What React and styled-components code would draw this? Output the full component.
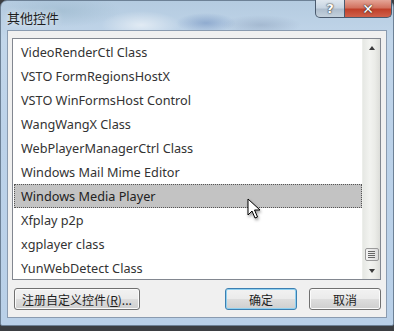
import React from "react";
import styled, { createGlobalStyle } from "styled-components";

const Global = createGlobalStyle`
  html, body { margin: 0; padding: 0; }
  body { width: 394px; height: 331px; overflow: hidden; background: #3b3e42; }
`;

const items = [
  "VideoRenderCtl Class",
  "VSTO FormRegionsHostX",
  "VSTO WinFormsHost Control",
  "WangWangX Class",
  "WebPlayerManagerCtrl Class",
  "Windows Mail Mime Editor",
  "Windows Media Player",
  "Xfplay p2p",
  "xgplayer class",
  "YunWebDetect Class",
];

const SELECTED = 6;

const Window = styled.div`
  width: 394px;
  height: 326px;
  box-sizing: border-box;
  border-radius: 7px 7px 2px 2px;
  background:
    radial-gradient(ellipse 40px 14px at 140px 24px, rgba(255,255,255,0.55), transparent),
    radial-gradient(ellipse 30px 10px at 205px 22px, rgba(90,125,180,0.45), transparent),
    radial-gradient(ellipse 40px 10px at 260px 24px, rgba(120,140,170,0.35), transparent),
    radial-gradient(ellipse 60px 16px at 60px 10px, rgba(150,180,200,0.5), transparent),
    linear-gradient(180deg, #b4cbe0 0%, #c2d6ea 12%, #bcd2e9 40%, #b9d0e8 100%);
  border: 1px solid #6d8196;
  display: flex;
  flex-direction: column;
  font-family: "Noto Sans", "Noto Sans CJK SC", sans-serif;
  position: relative;
`;

const TitleBar = styled.div`
  height: 29px;
  display: flex;
  justify-content: space-between;
  align-items: flex-start;
`;

const Title = styled.div`
  padding: 7px 0 0 6px;
  font-family: "Noto Sans CJK SC", sans-serif;
  font-size: 13px;
  color: #1e1e1e;
  text-shadow: 0 0 6px rgba(255,255,255,0.9);
`;

const Controls = styled.div`
  display: flex;
  margin-right: 1px;
  margin-top: -1px;
`;

const CtrlButton = styled.div`
  height: 18px;
  width: ${(p) => p.$w}px;
  box-sizing: border-box;
  border: 1px solid #4a5a6e;
  border-top: none;
  border-radius: ${(p) => (p.$close ? "0 0 5px 0" : "0 0 0 5px")};
  ${(p) => (p.$close ? "border-left: none;" : "")}
  background: ${(p) =>
    p.$close
      ? "linear-gradient(180deg, #e4a597 0%, #d2725f 45%, #c0402a 55%, #d0604a 100%)"
      : "linear-gradient(180deg, #dfe7ef 0%, #c8d5e2 45%, #aebdcd 55%, #c4d1dd 100%)"};
  display: flex;
  align-items: center;
  justify-content: center;
  color: #fff;
  font-family: "DejaVu Sans", sans-serif;
  font-weight: bold;
  font-size: ${(p) => (p.$close ? 14 : 13)}px;
  text-shadow: 0 0 2px #333, 0 0 1px #222;
`;

const Client = styled.div`
  margin: 0 6px 0 6px;
  height: 288px;
  box-sizing: border-box;
  background: #f0f0f0;
  border: 1px solid #8a9bb0;
  padding: 7px 5px 0 4px;
  display: flex;
  flex-direction: column;
`;

const ListBox = styled.div`
  height: 242px;
  box-sizing: border-box;
  border: 1px solid #828790;
  background: #fff;
  display: flex;
  overflow: hidden;
`;

const Rows = styled.div`
  flex: 1;
  padding-top: 1px;
  padding-left: 1px;
  overflow: hidden;
`;

const Row = styled.div`
  height: 24px;
  box-sizing: border-box;
  display: flex;
  align-items: center;
  padding-left: 7px;
  font-size: 12.7px;
  color: #333;
  white-space: nowrap;
  ${(p) =>
    p.$selected
      ? "background: #c3c3c3; border: 1px dotted #555; padding-left: 6px; color: #222;"
      : ""}
`;

const ScrollBar = styled.div`
  width: 17px;
  display: flex;
  flex-direction: column;
  align-items: center;
  background: linear-gradient(90deg, #e6e8e4 0%, #f2f3f0 40%, #ebece8 70%, #dcddd9 100%);
  border-left: 1px solid #eceeea;
`;

const Arrow = styled.div`
  height: 17px;
  display: flex;
  align-items: center;
  justify-content: center;
  &::after {
    content: "";
    border-left: 3.5px solid transparent;
    border-right: 3.5px solid transparent;
    ${(p) => (p.$down ? "border-top: 4px solid #3a3a3a;" : "border-bottom: 4px solid #3a3a3a;")}
  }
`;

const Track = styled.div`
  flex: 1;
  width: 100%;
  display: flex;
  flex-direction: column;
  justify-content: flex-end;
  align-items: center;
`;

const Thumb = styled.div`
  width: 14px;
  height: 13px;
  box-sizing: border-box;
  border: 1px solid #9a9a9a;
  border-radius: 2px;
  background: linear-gradient(90deg, #f4f4f4, #dcdcdc);
  display: flex;
  flex-direction: column;
  justify-content: center;
  align-items: center;
  gap: 1px;
  margin-bottom: 1px;
`;

const Grip = styled.span`
  width: 7px;
  height: 1px;
  background: #666;
`;

const ButtonRow = styled.div`
  display: flex;
  margin-top: 8px;
  padding-left: 2px;
  gap: 12px;
`;

const Button = styled.div`
  height: 22px;
  width: ${(p) => p.$w}px;
  box-sizing: border-box;
  border: 1px solid ${(p) => (p.$default ? "#3c7fb1" : "#707070")};
  border-radius: 3px;
  background: linear-gradient(180deg, #f2f2f2 0%, #ebebeb 48%, #dddddd 52%, #cfcfcf 100%);
  box-shadow: inset 0 0 0 1px ${(p) => (p.$default ? "#8fd0f0" : "#fbfbfb")};
  display: flex;
  align-items: center;
  justify-content: center;
  font-family: "Noto Sans CJK SC", sans-serif;
  font-size: 12px;
  color: #1e1e1e;
  ${(p) => (p.$push ? "margin-left: auto;" : "")}
`;

const Cursor = styled.svg`
  position: absolute;
  left: 246px;
  top: 197px;
  filter: drop-shadow(1px 2px 1.5px rgba(0,0,0,0.4));
`;

export default function App() {
  return (
    <>
      <Global />
      <Window>
        <TitleBar>
          <Title>其他控件</Title>
          <Controls>
            <CtrlButton $w={30}>?</CtrlButton>
            <CtrlButton $w={47} $close>
              ✕
            </CtrlButton>
          </Controls>
        </TitleBar>
        <Client>
          <ListBox>
            <Rows>
              {items.map((t, i) => (
                <Row key={t} $selected={i === SELECTED}>
                  {t}
                </Row>
              ))}
            </Rows>
            <ScrollBar>
              <Arrow />
              <Track>
                <Thumb>
                  <Grip />
                  <Grip />
                  <Grip />
                  <Grip />
                </Thumb>
              </Track>
              <Arrow $down />
            </ScrollBar>
          </ListBox>
          <ButtonRow>
            <Button $w={126}>
              注册自定义控件(<u>R</u>)...
            </Button>
            <Button $w={72} $default $push>
              确定
            </Button>
            <Button $w={72}>取消</Button>
          </ButtonRow>
        </Client>
        <Cursor width="14" height="22" viewBox="0 0 14 22">
          <path
            d="M1 1 L1 17 L5 13 L8 20 L10.5 19 L7.5 12 L13 12 Z"
            fill="#fff"
            stroke="#000"
            strokeWidth="1"
            strokeLinejoin="round"
          />
        </Cursor>
      </Window>
    </>
  );
}
